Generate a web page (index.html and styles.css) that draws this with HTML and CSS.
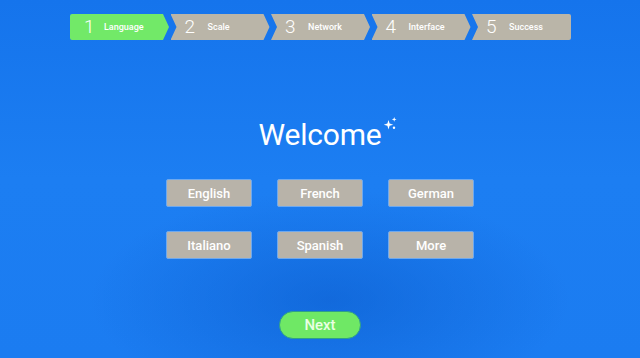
FILE: index.html
```html
<!DOCTYPE html>
<html>
<head>
<meta charset="utf-8">
<link rel="stylesheet" href="styles.css">
</head>
<body>
<div class="screen">
  <div class="steps">
    <div class="step first active"><span class="num">1</span><span class="label">Language</span></div>
    <div class="step mid"><span class="num">2</span><span class="label">Scale</span></div>
    <div class="step mid"><span class="num">3</span><span class="label">Network</span></div>
    <div class="step mid"><span class="num">4</span><span class="label">Interface</span></div>
    <div class="step last"><span class="num">5</span><span class="label">Success</span></div>
  </div>
  <h1 class="title">Welcome<svg class="sparkle" width="15" height="15" viewBox="0 0 15 15"><path d="M5.5 3 L6.6 6.6 L10.2 7.7 L6.6 8.8 L5.5 12.4 L4.4 8.8 L0.8 7.7 L4.4 6.6 Z" fill="#fff"/><path d="M11.2 0 L11.8 1.8 L13.6 2.4 L11.8 3 L11.2 4.8 L10.6 3 L8.8 2.4 L10.6 1.8 Z" fill="#fff"/><circle cx="11" cy="10.8" r="1.2" fill="#fff"/></svg></h1>
  <div class="langs">
    <button class="lang">English</button>
    <button class="lang">French</button>
    <button class="lang">German</button>
    <button class="lang">Italiano</button>
    <button class="lang">Spanish</button>
    <button class="lang">More</button>
  </div>
  <button class="next">Next</button>
</div>
</body>
</html>
```
FILE: styles.css
```css
html, body {
  margin: 0;
  padding: 0;
  width: 640px;
  height: 358px;
  overflow: hidden;
}
body {
  font-family: Roboto, "Liberation Sans", sans-serif;
  color: #fff;
  background:
    radial-gradient(ellipse 240px 110px at 330px 300px, rgba(0, 70, 180, 0.35), rgba(0, 70, 180, 0) 100%),
    linear-gradient(180deg, #1574ec 0%, #1c7ef2 50%, #1b7cf1 100%);
}
.screen {
  display: flex;
  flex-direction: column;
  align-items: center;
  height: 358px;
}
.steps {
  display: flex;
  gap: 1.5px;
  margin-top: 14px;
  margin-left: 1px;
  height: 26px;
}
.step {
  width: 99px;
  height: 26px;
  background: #bab5a8;
  display: flex;
  align-items: center;
  box-sizing: border-box;
  padding-left: 14px;
}
.step.active {
  background: #72e968;
}
.step.first {
  clip-path: polygon(0 0, calc(100% - 6px) 0, 100% 50%, calc(100% - 6px) 100%, 0 100%);
  border-radius: 2px 0 0 2px;
}
.step.first .num {
  width: 20px;
}
.step.mid {
  clip-path: polygon(0 0, calc(100% - 6px) 0, 100% 50%, calc(100% - 6px) 100%, 0 100%, 6px 50%);
}
.step.last {
  clip-path: polygon(0 0, 100% 0, 100% 100%, 0 100%, 6px 50%);
  border-radius: 0 2px 2px 0;
}
.num {
  font-size: 19px;
  font-weight: 300;
  width: 23px;
  line-height: 26px;
}
.label {
  font-size: 9px;
  font-weight: 500;
  line-height: 26px;
}
.title {
  margin: 77px 0 0 0;
  font-size: 30px;
  font-weight: 400;
  line-height: 36px;
  position: relative;
  letter-spacing: -0.2px;
}
.sparkle {
  position: absolute;
  right: -16px;
  top: 0;
}
.langs {
  display: grid;
  grid-template-columns: repeat(3, 86px);
  grid-template-rows: 28px 28px;
  column-gap: 25px;
  row-gap: 24px;
  margin-top: 26px;
}
.lang {
  background: #b8b3a9;
  border: 1px solid #6fa9ee;
  border-radius: 2px;
  color: #fff;
  font-family: Roboto, "Liberation Sans", sans-serif;
  font-size: 13px;
  font-weight: 500;
  padding: 0;
}
.next {
  margin-top: 52px;
  width: 82px;
  height: 28px;
  border-radius: 14px;
  background: #6fe865;
  border: 1px solid #2f9f8a;
  color: #e9ffe3;
  font-family: Roboto, "Liberation Sans", sans-serif;
  font-size: 15px;
  font-weight: 500;
  padding: 0;
}
```
